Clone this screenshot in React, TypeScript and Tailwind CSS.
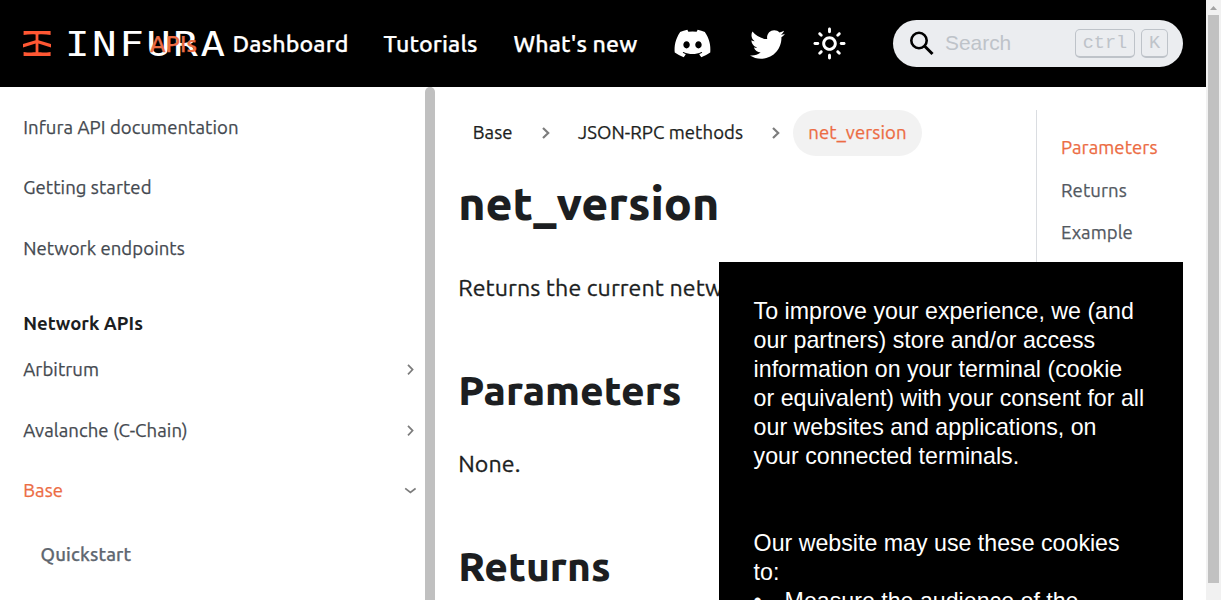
import { FaDiscord, FaTwitter } from "react-icons/fa";

function Mark() {
  return (
    <svg className="shrink-0" width="28" height="26" viewBox="0 0 28 26" fill="#ff5733">
      <path d="M.6 0H27.6V4C24 3.4 20 3.2 15.4 3.4V9.2L28 13V16.6L15.4 12.6V21.3C20 21.5 24 21.4 27.6 20.9V25H.6V20.9C4 21.4 8 21.5 12.6 21.3V12.6L0 16.6V13L12.6 9.2V3.4C8 3.2 4 3.4 .6 4Z" />
    </svg>
  );
}

function Sun() {
  return (
    <svg width="35" height="35" viewBox="0 0 24 24" fill="white" className="ml-[27px] shrink-0">
      <path d="M12,9c1.65,0,3,1.35,3,3s-1.35,3-3,3s-3-1.35-3-3S10.35,9,12,9 M12,7c-2.76,0-5,2.24-5,5s2.24,5,5,5s5-2.24,5-5 S14.76,7,12,7L12,7z M2,13l2,0c0.55,0,1-0.45,1-1s-0.45-1-1-1l-2,0c-0.55,0-1,0.45-1,1S1.45,13,2,13z M20,13l2,0c0.55,0,1-0.45,1-1 s-0.45-1-1-1l-2,0c-0.55,0-1,0.45-1,1S19.45,13,20,13z M11,2v2c0,0.55,0.45,1,1,1s1-0.45,1-1V2c0-0.55-0.45-1-1-1S11,1.45,11,2z M11,20v2c0,0.55,0.45,1,1,1s1-0.45,1-1v-2c0-0.55-0.45-1-1-1C11.45,19,11,19.45,11,20z M5.99,4.58c-0.39-0.39-1.03-0.39-1.41,0 c-0.39,0.39-0.39,1.03,0,1.41l1.06,1.06c0.39,0.39,1.03,0.39,1.41,0s0.39-1.03,0-1.41L5.99,4.58z M18.36,16.95 c-0.39-0.39-1.03-0.39-1.41,0c-0.39,0.39-0.39,1.03,0,1.41l1.06,1.06c0.39,0.39,1.03,0.39,1.41,0c0.39-0.39,0.39-1.03,0-1.41 L18.36,16.95z M19.42,5.99c0.39-0.39,0.39-1.03,0-1.41c-0.39-0.39-1.03-0.39-1.41,0l-1.06,1.06c-0.39,0.39-0.39,1.03,0,1.41 s1.03,0.39,1.41,0L19.42,5.99z M7.05,18.36c0.39-0.39,0.39-1.03,0-1.41c-0.39-0.39-1.03-0.39-1.41,0l-1.06,1.06 c-0.39,0.39-0.39,1.03,0,1.41s1.03,0.39,1.41,0L7.05,18.36z" />
    </svg>
  );
}

function Chevron({ down = false }: { down?: boolean }) {
  return (
    <svg width="12" height="12" viewBox="0 0 12 12" fill="none" stroke="#7c7c7c" strokeWidth="1.7">
      {down ? <path d="M1.2 3.4L6.4 7.4L11.6 3.4" /> : <path d="M4 .8L8.6 5.6L4 10.4" />}
    </svg>
  );
}

function CrumbChevron() {
  return (
    <svg width="10" height="14" viewBox="0 0 10 14" fill="none" stroke="#7d7d7d" strokeWidth="2.2">
      <path d="M2 2L7.2 7L2 12" />
    </svg>
  );
}

function Header() {
  return (
    <header className="flex h-[87px] items-center bg-black text-[23.2px] font-medium text-white">
      <div className="flex w-[150px] shrink-0 items-center pl-[23px]">
        <Mark />
        <span className="ml-[14px] origin-left scale-x-[1.2] font-['DejaVu_Sans_Mono',monospace] text-[34px] leading-[34px] font-normal tracking-[2.1px]">
          INFURA
        </span>
      </div>
      <nav className="relative flex h-[30px] shrink-0 items-center tracking-[0.12px] whitespace-nowrap [-webkit-text-stroke:0.25px]">
        <a className="w-[82.5px] text-[#ec6c43]">APIs</a>
        <a className="w-[151px]">Dashboard</a>
        <a className="w-[130px]">Tutorials</a>
        <a className="w-[159.5px]">What's new</a>
      </nav>
      <FaDiscord className="h-[39px] w-[39px] shrink-0" />
      <FaTwitter className="relative top-px ml-[38px] h-[35px] w-[35px] shrink-0" />
      <Sun />
      <div className="ml-[46px] flex h-[47px] w-[290px] shrink-0 items-center rounded-full bg-[#ebedf0] pr-[15px] pl-[17px] font-['Liberation_Sans',sans-serif] text-[20.9px] font-normal text-[#bec3c9]">
        <svg width="25" height="25" viewBox="0 0 25 25" fill="none" stroke="black" strokeWidth="2.6">
          <circle cx="9" cy="9.5" r="7.7" />
          <path d="M14.5 15L22.5 23" strokeWidth="3" />
        </svg>
        <span className="relative -top-px ml-[10px] flex-1">Search</span>
        <kbd className="flex h-[29px] w-[60px] items-center justify-center rounded-[5px] border border-b-2 border-[#bec3c9] pt-[2px] font-['Liberation_Mono',monospace] text-[18.56px]">
          ctrl
        </kbd>
        <kbd className="ml-[6px] flex h-[29px] w-[27px] items-center justify-center rounded-[5px] border border-b-2 border-[#bec3c9] pt-[2px] font-['Liberation_Mono',monospace] text-[18.56px]">
          K
        </kbd>
      </div>
    </header>
  );
}

function Sidebar() {
  return (
    <aside className="flex w-[435px] shrink-0 bg-white text-[18.56px] leading-[28px] tracking-[0.07px] text-[#444950] [-webkit-text-stroke:0.25px]">
      <div className="flex flex-1 flex-col pt-[27px] pr-[9px] pl-[23.2px]">
        <a className="mb-[32px]">Infura API documentation</a>
        <a className="mb-[33px]">Getting started</a>
        <a className="mb-[47px]">Network endpoints</a>
        <span className="mb-[18px] font-bold tracking-normal text-[#1c1e21] [-webkit-text-stroke:0px]">
          Network APIs
        </span>
        <a className="mb-[33px] flex items-center justify-between">
          Arbitrum <Chevron />
        </a>
        <a className="mb-[32px] flex items-center justify-between">
          <span>Avalanche (C-Chain)</span> <Chevron />
        </a>
        <a className="mb-[36px] flex items-center justify-between text-[#ec6c43]">
          Base <Chevron down />
        </a>
        <a className="pl-[17.4px] font-medium tracking-[0.16px] text-[#606770]">Quickstart</a>
      </div>
      <div className="w-[10px] rounded-t-[5px] bg-[#c0c0c0]" />
    </aside>
  );
}

function Article() {
  return (
    <article className="w-[601px] shrink-0 pt-[23px] pl-[23.2px] text-[23.2px] text-[#1c1e21]">
      <nav className="flex h-[46px] items-center text-[18.56px] tracking-[0.07px] whitespace-nowrap [-webkit-text-stroke:0.25px]">
        <span className="w-[82.8px] pl-[14.5px]">Base</span>
        <CrumbChevron />
        <span className="ml-[27px] w-[193px]">JSON-RPC methods</span>
        <CrumbChevron />
        <span className="ml-[12px] flex h-[46px] w-[129px] items-center justify-center rounded-full bg-[#f2f2f2] text-[#ec6c43]">
          net_version
        </span>
      </nav>
      <h1 className="mt-[18px] text-[46.4px] leading-[58px] font-extrabold">net_version</h1>
      <p className="mt-[37px] leading-[36px] tracking-[0.09px] whitespace-nowrap [-webkit-text-stroke:0.3px]">
        Returns the current network ID.
      </p>
      <h2 className="mt-[60px] text-[40.6px] leading-[50px] font-extrabold">Parameters</h2>
      <p className="mt-[30px] leading-[36px] tracking-[0.09px] [-webkit-text-stroke:0.3px]">None.</p>
      <h2 className="mt-[60px] text-[40.6px] leading-[50px] font-extrabold">Returns</h2>
    </article>
  );
}

function Contents() {
  return (
    <div className="pt-[23px]">
      <ul className="flex h-[500px] flex-col gap-[14.6px] border-l border-[#dadde1] pt-[24px] pl-[24px] text-[18.56px] leading-[28px] tracking-[0.07px] text-[#525860] [-webkit-text-stroke:0.25px]">
        <li className="text-[#ec6c43]">Parameters</li>
        <li>Returns</li>
        <li>Example</li>
      </ul>
    </div>
  );
}

function CookieNotice() {
  return (
    <section className="absolute top-[262px] left-[719px] h-[400px] w-[464px] bg-black pt-[35px] pl-[34.6px] font-['Liberation_Sans',sans-serif] text-[23.2px] leading-[29px] text-white">
      <p className="w-[393px]">
        To improve your experience, we (and our partners) store and/or access information on your
        terminal (cookie or equivalent) with your consent for all our websites and applications, on
        your connected terminals.
      </p>
      <p className="mt-[58px] w-[393px]">Our website may use these cookies to:</p>
      <ul className="flex">
        <li className="flex">
          <span className="w-[31px]">•</span>
          Measure the audience of the
        </li>
      </ul>
    </section>
  );
}

function Scrollbar() {
  return (
    <div className="flex w-[15px] shrink-0 flex-col items-center bg-[#f1f1f1]">
      <svg className="shrink-0" width="15" height="15" viewBox="0 0 15 15" fill="#a3a3a3">
        <path d="M4 10L7.5 6L11 10Z" />
      </svg>
      <div className="h-[568px] w-[11px] bg-[#c1c1c1]" />
    </div>
  );
}

export default function App() {
  return (
    <div className="relative flex h-[600px] w-[1221px] overflow-hidden bg-white font-['Ubuntu','Noto_Sans',sans-serif]">
      <div className="flex w-[1206px] shrink-0 flex-col">
        <Header />
        <main className="flex h-[513px] overflow-hidden">
          <Sidebar />
          <Article />
          <Contents />
        </main>
      </div>
      <Scrollbar />
      <CookieNotice />
    </div>
  );
}
